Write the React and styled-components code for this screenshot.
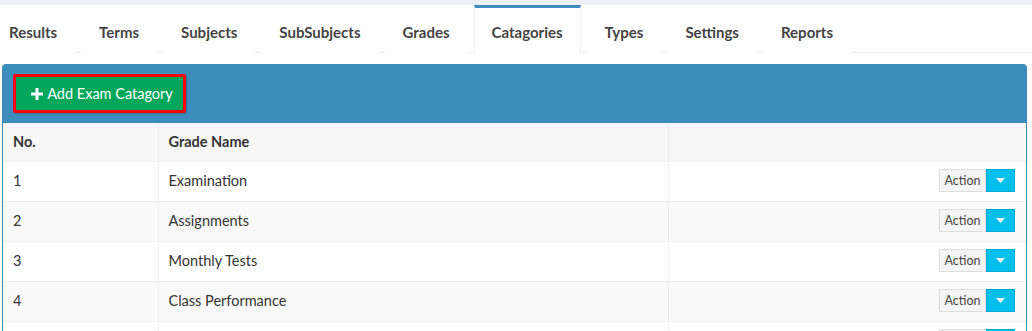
import React from "react";
import styled, { createGlobalStyle } from "styled-components";

const Global = createGlobalStyle`
  html, body { margin: 0; padding: 0; background: #fff; }
  body { font-family: Lato, "Open Sans", sans-serif; font-size: 14.5px; color: #333; }
  * { box-sizing: border-box; }
`;

const Page = styled.div`
  width: 1032px;
  height: 331px;
  overflow: hidden;
  background: #fff;
  border-top: 5px solid #ecf0f5;
`;

const TabBar = styled.ul`
  display: flex;
  list-style: none;
  margin: 0 0 0 -9px;
  padding: 0;
  height: 48px;
  border-bottom: 1px solid #f0f0f0;
`;

const Tab = styled.li`
  margin-right: 6px;
  padding: 2px 17px 0;
  height: 48px;
  display: flex;
  align-items: center;
  font-weight: 700;
  font-size: 15px;
  color: #444;
  white-space: nowrap;
  border-top: 3px solid ${(p) => (p.$active ? "#3c8dbc" : "transparent")};
  border-left: 1px solid ${(p) => (p.$active ? "#f0f0f0" : "transparent")};
  border-right: 1px solid ${(p) => (p.$active ? "#f0f0f0" : "transparent")};
  background: #fff;
`;

const Panel = styled.div`
  margin: 11px 5px 0 2px;
  border: 1px solid #3c8dbc;
  border-radius: 3px;
  overflow: hidden;
`;

const PanelHead = styled.div`
  background: #3c8dbc;
  height: 58px;
  padding: 9px 10px;
  display: flex;
  align-items: flex-start;
`;

const AddButton = styled.button`
  height: 39px;
  width: 173px;
  background: #00a65a;
  border: 3px solid #ff0000;
  border-radius: 2px;
  color: #fff;
  font-family: inherit;
  font-size: 14.5px;
  display: flex;
  align-items: center;
  justify-content: center;
  gap: 4px;
  padding: 0 0 0 5px;
  box-shadow: 1px 1px 1px rgba(0,0,0,0.2);
`;

const Table = styled.table`
  width: 100%;
  border-collapse: collapse;
  table-layout: fixed;
`;

const Th = styled.th`
  text-align: left;
  font-weight: 700;
  color: #333;
  height: 38px;
  padding: 0 10px;
  background: #f7f7f7;
  border-right: 1px solid #eee;
  width: ${(p) => p.$w || "auto"};
  &:last-child { border-right: none; }
`;

const Tr = styled.tr`
  background: ${(p) => (p.$odd ? "#f9f9f9" : "#fff")};
  border-top: 1px solid #f0f0f0;
`;

const Td = styled.td`
  height: 40px;
  padding: 0 11px 1px 10px;
  color: #333;
  border-right: 1px solid #f0f0f0;
  text-align: ${(p) => (p.$right ? "right" : "left")};
  &:last-child { border-right: none; }
`;

const BtnGroup = styled.div`
  display: inline-flex;
  height: 23px;
  vertical-align: middle;
`;

const ActionBtn = styled.span`
  width: 47px;
  display: flex;
  align-items: center;
  justify-content: center;
  background: #f4f4f4;
  border: 1px solid #ddd;
  color: #444;
  font-size: 12.5px;
`;

const CaretBtn = styled.span`
  width: 29px;
  display: flex;
  align-items: center;
  justify-content: center;
  background: #00c0ef;
  border: 1px solid #00acd6;
`;

const Caret = () => (
  <svg width="9" height="5" viewBox="0 0 9 5"><path d="M0 0h9L4.5 5z" fill="#fff" /></svg>
);

const Plus = () => (
  <svg width="12" height="12" viewBox="0 0 12 12"><path d="M4.5 0h3v4.5H12v3H7.5V12h-3V7.5H0v-3h4.5z" fill="#fff" /></svg>
);

const tabs = ["Results", "Terms", "Subjects", "SubSubjects", "Grades", "Catagories", "Types", "Settings", "Reports"];
const rows = ["Examination", "Assignments", "Monthly Tests", "Class Performance", "Final"];

export default function App() {
  return (
    <>
      <Global />
      <Page>
        <TabBar>
          {tabs.map((t) => (
            <Tab key={t} $active={t === "Catagories"}>{t}</Tab>
          ))}
        </TabBar>
        <Panel>
          <PanelHead>
            <AddButton><Plus /> Add Exam Catagory</AddButton>
          </PanelHead>
          <Table>
            <thead>
              <tr>
                <Th $w="155px">No.</Th>
                <Th $w="510px">Grade Name</Th>
                <Th></Th>
              </tr>
            </thead>
            <tbody>
              {rows.map((r, i) => (
                <Tr key={r} $odd={i % 2 === 1}>
                  <Td>{i + 1}</Td>
                  <Td>{r}</Td>
                  <Td $right>
                    <BtnGroup>
                      <ActionBtn>Action</ActionBtn>
                      <CaretBtn><Caret /></CaretBtn>
                    </BtnGroup>
                  </Td>
                </Tr>
              ))}
            </tbody>
          </Table>
        </Panel>
      </Page>
    </>
  );
}
